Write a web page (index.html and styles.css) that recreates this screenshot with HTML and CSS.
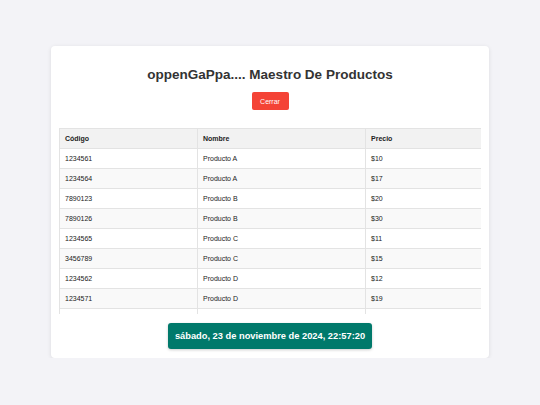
FILE: index.html
```html
<!DOCTYPE html>
<html lang="es">
<head>
<meta charset="utf-8">
<title>Maestro De Productos</title>
<link rel="stylesheet" href="styles.css">
</head>
<body>
<div class="card">
  <h1 class="title">oppenGaPpa.... Maestro De Productos</h1>
  <div class="actions"><button class="btn-close">Cerrar</button></div>
  <div class="table-wrap">
    <table class="products">
      <thead>
        <tr><th class="c1">Código</th><th class="c2">Nombre</th><th class="c3">Precio</th></tr>
      </thead>
      <tbody>
        <tr><td>1234561</td><td>Producto A</td><td>$10</td></tr>
        <tr><td>1234564</td><td>Producto A</td><td>$17</td></tr>
        <tr><td>7890123</td><td>Producto B</td><td>$20</td></tr>
        <tr><td>7890126</td><td>Producto B</td><td>$30</td></tr>
        <tr><td>1234565</td><td>Producto C</td><td>$11</td></tr>
        <tr><td>3456789</td><td>Producto C</td><td>$15</td></tr>
        <tr><td>1234562</td><td>Producto D</td><td>$12</td></tr>
        <tr><td>1234571</td><td>Producto D</td><td>$19</td></tr>
        <tr><td></td><td></td><td></td></tr>
      </tbody>
    </table>
  </div>
  <div class="footer"><div class="datetime">sábado, 23 de noviembre de 2024, 22:57:20</div></div>
</div>
</body>
</html>
```

FILE: styles.css
```css
html, body {
  margin: 0;
  padding: 0;
}
body {
  background: #f3f3f7;
  font-family: "Liberation Sans", Arial, sans-serif;
  color: #333;
  padding-top: 46px;
}
.card {
  width: 438px;
  height: 312px;
  margin: 0 0 0 51px;
  background: #fff;
  border-radius: 4px;
  box-shadow: 0 1px 4px rgba(0,0,0,0.1);
  box-sizing: border-box;
  padding: 20px 8px 0;
}
.title {
  margin: 0;
  font-size: 13.5px;
  line-height: 18px;
  font-weight: bold;
  text-align: center;
  color: #333;
}
.actions {
  display: flex;
  justify-content: center;
  margin-top: 8px;
}
.btn-close {
  width: 37px;
  height: 18px;
  padding: 0;
  border: none;
  border-radius: 2px;
  background: #f44336;
  color: #fff;
  font-family: "Liberation Sans", Arial, sans-serif;
  font-size: 7px;
}
.table-wrap {
  margin-top: 18px;
  height: 186px;
  overflow: hidden;
}
.products {
  width: 422px;
  border-collapse: collapse;
  font-size: 7px;
  table-layout: fixed;
  color: #222;
}
.products th, .products td {
  border: 1px solid #e3e3e3;
  height: 20px;
  padding: 0 0 0 5px;
  text-align: left;
  box-sizing: border-box;
}
.products th {
  background: #f2f2f2;
  font-weight: bold;
}
.products tbody tr:nth-child(even) td {
  background: #f9f9f9;
}
.c1 { width: 138px; }
.c2 { width: 168px; }
.c3 { width: 116px; }
.footer {
  display: flex;
  justify-content: center;
  margin-top: 9px;
}
.datetime {
  background: #00796b;
  color: #fff;
  font-weight: bold;
  font-size: 9.3px;
  height: 26px;
  line-height: 26px;
  padding: 0 7px;
  border-radius: 3px;
  box-shadow: 0 1px 3px rgba(0,0,0,0.2);
}
```
